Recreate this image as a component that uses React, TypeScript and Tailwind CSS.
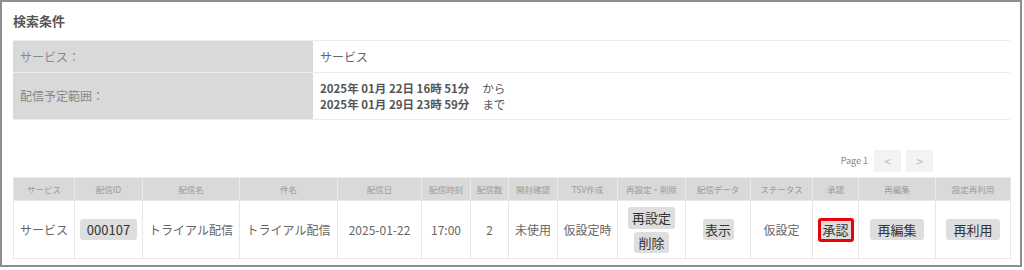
import React from 'react';

const font = { fontFamily: '"Noto Sans CJK JP", "Noto Sans", sans-serif' };

const columns = [
  { label: 'サービス', w: 'w-[61px]' },
  { label: '配信ID', w: 'w-[68px]' },
  { label: '配信名', w: 'w-[97px]' },
  { label: '件名', w: 'w-[98px]' },
  { label: '配信日', w: 'w-[84px]' },
  { label: '配信時刻', w: 'w-[49px]' },
  { label: '配信数', w: 'w-[38px]' },
  { label: '開封確認', w: 'w-[49px]' },
  { label: 'TSV作成', w: 'w-[60px]' },
  { label: '再設定・削除', w: 'w-[68px]' },
  { label: '配信データ', w: 'w-[65px]' },
  { label: 'ステータス', w: 'w-[62px]' },
  { label: '承認', w: 'w-[46px]' },
  { label: '再編集', w: 'w-[77px]' },
  { label: '設定再利用', w: 'w-[75px]' },
];

function Btn({ children, className = '' }: { children: React.ReactNode; className?: string }) {
  return (
    <span
      className={`inline-flex items-center justify-center whitespace-nowrap rounded-[3px] bg-[#dedede] text-[13px] leading-none text-[#333] ${className}`}
    >
      {children}
    </span>
  );
}

export default function App() {
  return (
    <div style={font} className="w-[1024px] h-[270px] bg-white">
      <div className="w-[1022px] h-[267px] border-2 border-[#8e8e8e] bg-white px-[11px]">
        <h2 className="pt-[10px] h-[38px] text-[13px] font-bold leading-[18px] text-[#555]">検索条件</h2>

        <table className="w-[997px] table-fixed border-collapse text-[12px]">
          <tbody>
            <tr className="h-[32px] border-t border-[#ececec]">
              <td className="w-[300px] bg-[#d9d9d9] pl-[7px] text-[#888]">サービス：</td>
              <td className="pl-[7px] text-[#666]">サービス</td>
            </tr>
            <tr className="h-[47px] border-t border-b border-[#ececec]">
              <td className="w-[300px] bg-[#d9d9d9] pl-[7px] text-[#888]">配信予定範囲：</td>
              <td className="pl-[7px] text-[11.5px] leading-[16px] text-[#555]">
                <div>
                  <span className="font-bold">2025年 01月 22日 16時 51分</span>
                  <span className="ml-[13px]">から</span>
                </div>
                <div>
                  <span className="font-bold">2025年 01月 29日 23時 59分</span>
                  <span className="ml-[13px]">まで</span>
                </div>
              </td>
            </tr>
          </tbody>
        </table>

        <div className="mt-[29px] flex h-[23px] items-center justify-end gap-[5px] pr-[76px]">
          <span className="mr-[1px] text-[9px] text-[#888]">Page 1</span>
          <span className="flex h-[22px] w-[27px] items-center justify-center bg-[#f3f3f3] text-[12px] text-[#bbb]">&lt;</span>
          <span className="flex h-[22px] w-[27px] items-center justify-center bg-[#f3f3f3] text-[12px] text-[#bbb]">&gt;</span>
        </div>

        <table className="mt-[5px] w-[997px] table-fixed border-collapse text-center">
          <colgroup>
            {columns.map((c) => (
              <col key={c.label} className={c.w} />
            ))}
          </colgroup>
          <thead>
            <tr className="h-[23px] bg-[#d9d9d9]">
              {columns.map((c) => (
                <th
                  key={c.label}
                  className="border border-[#e9e9e9] p-0 text-[8.5px] font-normal whitespace-nowrap text-[#999]"
                >
                  {c.label}
                </th>
              ))}
            </tr>
          </thead>
          <tbody className="text-[12px] text-[#666]">
            <tr className="h-[58px]">
              <td className="border border-[#e6e6e6]">サービス</td>
              <td className="border border-[#e6e6e6]">
                <Btn className="h-[21px] w-[57px]">000107</Btn>
              </td>
              <td className="border border-[#e6e6e6]">トライアル配信</td>
              <td className="border border-[#e6e6e6]">トライアル配信</td>
              <td className="border border-[#e6e6e6]">2025-01-22</td>
              <td className="border border-[#e6e6e6]">17:00</td>
              <td className="border border-[#e6e6e6]">2</td>
              <td className="border border-[#e6e6e6]">未使用</td>
              <td className="border border-[#e6e6e6]">仮設定時</td>
              <td className="border border-[#e6e6e6]">
                <div className="flex flex-col items-center gap-[3px]">
                  <Btn className="h-[22px] px-[4px]">再設定</Btn>
                  <Btn className="h-[21px] px-[4px]">削除</Btn>
                </div>
              </td>
              <td className="border border-[#e6e6e6]">
                <Btn className="h-[21px] w-[31px]">表示</Btn>
              </td>
              <td className="border border-[#e6e6e6]">仮設定</td>
              <td className="border border-[#e6e6e6]">
                <Btn className="h-[24px] w-[36px] border-[3px] border-[#e8000b]">承認</Btn>
              </td>
              <td className="border border-[#e6e6e6]">
                <Btn className="h-[21px] w-[54px]">再編集</Btn>
              </td>
              <td className="border border-[#e6e6e6]">
                <Btn className="h-[21px] w-[54px]">再利用</Btn>
              </td>
            </tr>
          </tbody>
        </table>
      </div>
    </div>
  );
}
